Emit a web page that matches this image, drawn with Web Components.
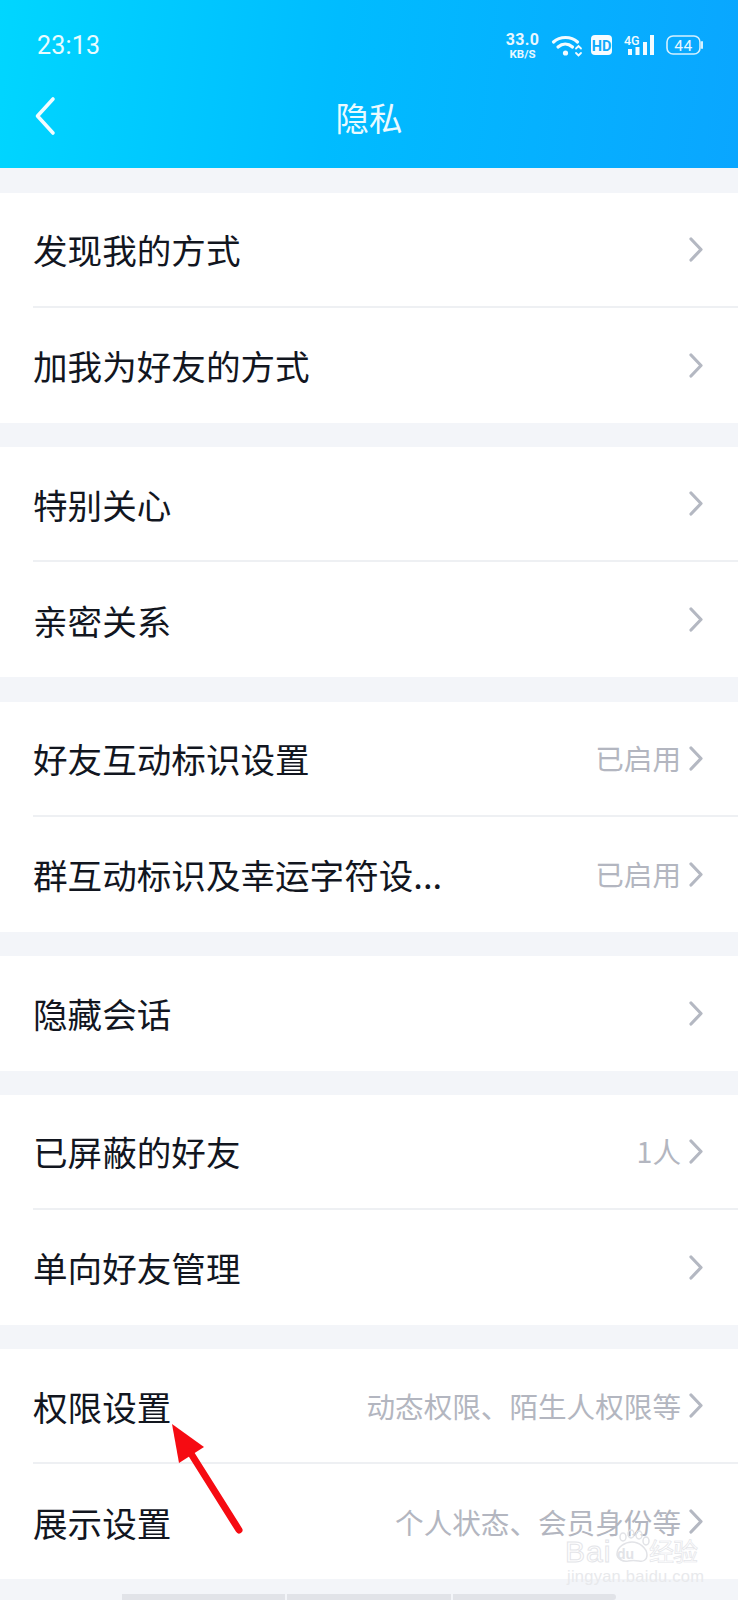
<!DOCTYPE html>
<html lang="zh"><head><meta charset="utf-8"><title>隐私</title>
<style>
html,body{margin:0;padding:0;background:#f3f5f9}
body{width:738px;height:1600px;overflow:hidden;position:relative;font-family:"Noto Sans CJK SC","Noto Sans",sans-serif}
main{display:flex;flex-direction:column;gap:24.3px;padding-top:25px}
</style></head><body>
<qq-header title="隐私"></qq-header>
<main>
<set-group><set-row label="发现我的方式"></set-row><set-row label="加我为好友的方式" last></set-row></set-group>
<set-group><set-row label="特别关心"></set-row><set-row label="亲密关系" last></set-row></set-group>
<set-group><set-row label="好友互动标识设置" value="已启用"></set-row><set-row label="群互动标识及幸运字符设..." value="已启用" last></set-row></set-group>
<set-group><set-row label="隐藏会话" last></set-row></set-group>
<set-group><set-row label="已屏蔽的好友" value="1人"></set-row><set-row label="单向好友管理" last></set-row></set-group>
<set-group><set-row label="权限设置" value="动态权限、陌生人权限等"></set-row><set-row label="展示设置" value="个人状态、会员身份等" last></set-row></set-group>
</main>
<home-pill></home-pill>
<red-arrow></red-arrow>
<baidu-mark></baidu-mark>
<script>
const def=(name,html,init)=>customElements.define(name,class extends HTMLElement{
  connectedCallback(){ if(this.shadowRoot)return; const r=this.attachShadow({mode:'open'}); r.innerHTML=html; init&&init(r,this);}
});
def('qq-status','<style>:host{display:flex;align-items:flex-start;justify-content:space-between;height:85px;padding:0 34px 0 37px;color:#fff;box-sizing:border-box}.t{font:400 25px/1 Roboto,sans-serif;letter-spacing:.2px;margin-top:33px;color:#e9fcff}.i{display:flex;margin-top:33px}.sp{display:flex;flex-direction:column;align-items:center;width:33px;color:#e8f7ff}.sp b{font:700 16px/14px Roboto,sans-serif;letter-spacing:.3px}.sp i{font:700 11.5px/11px Roboto,sans-serif;margin-top:1.5px}svg{display:block}text{font-family:Roboto,sans-serif}</style><div class="t">23:13</div><div class="i"><div class="sp"><b>33.0</b><i>KB/S</i></div><svg width="157" height="24" viewBox="0 0 157 24" style="margin-left:8px" fill="none" stroke="#f2fbff" stroke-linecap="round"><path d="M6.5 9C13 3 24 3 30.5 9" stroke-width="3.2"/><path d="M11 14C15.5 10 21 10 25.5 14" stroke-width="3.2"/><circle cx="18.5" cy="20" r="2.6" fill="#f2fbff" stroke="none"/><path d="M29 15.5l2.5-2.5 2.5 2.5M29 20l2.5 2.5 2.5-2.5" stroke-width="1.8"/><rect x="44" y="2" width="21" height="20" rx="4" fill="#f6fcff" stroke="none"/><text x="54.5" y="17.5" font-size="14.5" font-weight="700" text-anchor="middle" fill="#0ea9fb" stroke="none">HD</text><text x="77" y="12" font-size="12.5" font-weight="500" fill="#f2fbff" stroke="none">4G</text><g fill="#f2fbff" stroke="none"><rect x="81" y="16" width="4" height="6"/><rect x="88.5" y="14" width="4" height="8"/><rect x="96" y="9" width="4" height="13"/><rect x="103" y="2" width="4" height="20"/></g><rect x="120" y="3" width="33" height="18" rx="6" stroke-width="1.6" stroke="#d5f1ff"/><path d="M155 9v6" stroke="#d5f1ff" stroke-width="2"/><text x="136.5" y="17.5" font-size="15.5" font-weight="400" text-anchor="middle" fill="#e8f7ff" stroke="none" letter-spacing=".6">44</text></svg></div>');
def('qq-header','<style>:host{display:block;height:168px;background:linear-gradient(97deg,#00d6ff 0%,#00bcff 45%,#0aa6ff 100%);color:#fff}.n{position:relative;display:flex;align-items:center;justify-content:center;height:64px;padding:0 36px}svg{position:absolute;left:34px;top:11px}h1{margin:0;font:400 33.5px/1 "Noto Sans CJK SC",sans-serif;color:#eafaff}</style><qq-status></qq-status><div class="n"><svg width="24" height="40" viewBox="0 0 24 40" fill="none" stroke="#f2fcff" stroke-width="3.6" stroke-linecap="round" stroke-linejoin="round"><path d="M19 3L3.5 20 19 37"/></svg><h1></h1></div>',(r,h)=>{r.querySelector('h1').textContent=h.getAttribute('title')});
def('set-group','<style>:host{display:block;background:#fff}</style><slot></slot>');
def('set-row','<style>:host{display:block;background:#fff;padding-left:33px}.w{display:flex;align-items:center;height:115px;box-sizing:border-box;padding-right:35px;border-bottom:2px solid #eef0f3}:host([last]) .w{border-bottom:0}.l{flex:1;font-size:34.6px;color:#12161f;white-space:nowrap;line-height:1}.v{font-size:28.6px;color:#b3b6c0;white-space:nowrap;line-height:1;margin-right:8px}svg{display:block;flex:none}</style><div class="w"><div class="l"></div><div class="v"></div><svg width="14" height="25" viewBox="0 0 14 25" fill="none" stroke="#b4b8c2" stroke-width="3.2" stroke-linecap="round" stroke-linejoin="round"><path d="M2 2l10 10.5L2 23"/></svg></div>',(r,h)=>{r.querySelector('.l').textContent=h.getAttribute('label');r.querySelector('.v').textContent=h.getAttribute('value')||''});
def('home-pill','<style>:host{position:absolute;left:122px;top:1594px;width:494px;height:6px;display:flex;gap:2px}i{flex:1;background:#e1e3e8}i:first-child{border-radius:3px 0 0 0}i:last-child{border-radius:0 3px 3px 0}</style><i></i><i></i><i></i>');
def('red-arrow','<style>:host{position:absolute;left:0;top:0;width:738px;height:1600px;pointer-events:none}svg{display:block}</style><svg width="738" height="1600" viewBox="0 0 738 1600"><path d="M172 1424L204 1447 179 1463Z" fill="#f60b12"/><path d="M190 1452L239 1530" stroke="#f60b12" stroke-width="7" stroke-linecap="round"/></svg>');
def('baidu-mark','<style>:host{position:absolute;left:566px;top:1530px;width:134px;height:54px;pointer-events:none}.a{position:absolute;left:-1px;top:7px;font:400 30px/1 "Liberation Sans",sans-serif;letter-spacing:1px;-webkit-text-stroke:1px #e4e5e9;color:rgba(255,255,255,.7)}.b{position:absolute;left:51px;top:17px;font:700 14px/1 "Liberation Sans",sans-serif;color:#e2e3e7}.c{position:absolute;left:83px;top:8px;font:400 25px/1 "Noto Sans CJK SC",sans-serif;-webkit-text-stroke:.7px #e4e5e9;color:rgba(255,255,255,.6);letter-spacing:-1px}.d{position:absolute;left:1px;top:38px;font:400 16.5px/1 "Liberation Sans",sans-serif;color:#e8e9ec;white-space:nowrap;letter-spacing:.25px}svg{position:absolute;left:44px;top:-2px}</style><svg width="46" height="38" viewBox="0 0 46 38" fill="none" stroke="#e2e3e7" stroke-width="1.5"><ellipse cx="13" cy="9" rx="3" ry="4"/><ellipse cx="21" cy="6" rx="3" ry="4"/><ellipse cx="29" cy="7" rx="3" ry="4"/><ellipse cx="36" cy="13" rx="3" ry="4"/><path d="M7 26c0-7 8-12 15-12s15 6 15 13c0 5-4 7-8 6-5-1-7-1-11 0-5 1-11-2-11-7z"/></svg><span class="a">Bai</span><span class="b">du</span><span class="c">经验</span><span class="d">jingyan.baidu.com</span>');
</script>
</body></html>
